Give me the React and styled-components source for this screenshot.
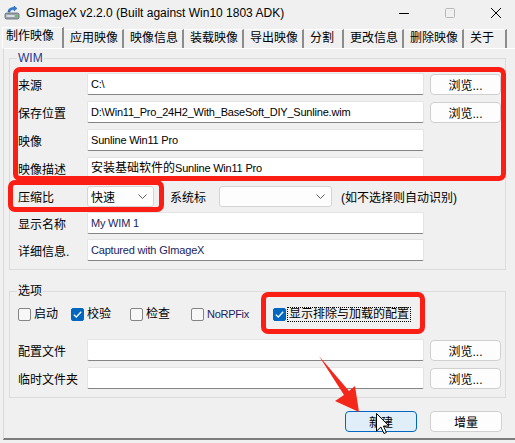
import React from "react";
import styled, { createGlobalStyle } from "styled-components";

const GlobalStyle = createGlobalStyle`
  html, body {
    margin: 0;
    padding: 0;
    background: #f0f0f0;
  }
  body {
    font-family: "Liberation Sans", "Noto Sans CJK SC", sans-serif;
    font-size: 12px;
    color: #000;
  }
`;

const Window = styled.div`
  position: relative;
  width: 515px;
  height: 443px;
  overflow: hidden;
  background: #f0f0f0;
`;

const TitleBar = styled.div`
  height: 25px;
  display: flex;
  align-items: center;
  padding-left: 4px;
  .title {
    margin-left: 6px;
    font-size: 12px;
    line-height: 16px;
  }
`;

const Controls = styled.div`
  margin-left: auto;
  margin-right: -4px;
  display: flex;
  height: 25px;
`;

const ControlBtn = styled.div`
  width: 46px;
  height: 25px;
  display: flex;
  align-items: center;
  justify-content: center;
`;

const TabStrip = styled.div`
  height: 23px;
  display: flex;
  align-items: flex-end;
  padding-left: 2px;
`;

const Tab = styled.div`
  box-sizing: border-box;
  width: ${({ $w }) => $w}px;
  height: ${({ $active }) => ($active ? 21 : 19)}px;
  padding-left: ${({ $active }) => ($active ? 3 : 6)}px;
  line-height: 17px;
  white-space: nowrap;
  border-top: 1px solid #fff;
  border-left: ${({ $active }) => ($active ? "1px solid #fff" : "none")};
  border-right: 2px solid #8c8c8c;
  background: #f0f0f0;
`;

const TabPage = styled.div`
  box-sizing: border-box;
  margin-left: 3px;
  height: 392px;
  padding: 9px 0 0 5px;
  border-top: 1px solid #fff;
  border-left: 1px solid #dadada;
  border-bottom: 2px solid #7c7c7c;
`;

const GroupBox = styled.div`
  position: relative;
  box-sizing: border-box;
  width: 497px;
  margin-top: ${({ $mt }) => $mt || 0}px;
  padding: ${({ $pad }) => $pad};
  border: 1px solid #dcdcdc;
`;

const GroupTitle = styled.span`
  position: absolute;
  top: -9px;
  left: 7px;
  padding: 0 1px;
  line-height: 16px;
  background: #f0f0f0;
  color: ${({ $color }) => $color || "#000"};
`;

const Row = styled.div`
  display: flex;
  align-items: center;
  height: ${({ $h }) => $h || 22}px;
  margin-top: ${({ $mt }) => $mt || 0}px;
`;

const Label = styled.div`
  width: 69px;
  flex-shrink: 0;
  white-space: nowrap;
`;

const TextBox = styled.div`
  box-sizing: border-box;
  width: 337px;
  height: 22px;
  padding-left: 3px;
  line-height: 20px;
  font-size: 11px;
  letter-spacing: -0.2px;
  background: #fff;
  border: 1px solid #e4e4e4;
  border-bottom-color: #858585;
  border-radius: 2px;
  white-space: nowrap;
  overflow: hidden;
  color: ${({ $color }) => $color || "#000"};
`;

const Cjk = styled.span`
  font-size: 12px;
  letter-spacing: 0;
`;

const Button = styled.div`
  box-sizing: border-box;
  width: 71px;
  height: 21px;
  margin-left: ${({ $ml }) => $ml || 0}px;
  display: flex;
  align-items: center;
  justify-content: center;
  background: ${({ $primary }) => ($primary ? "#e0eef9" : "#fdfdfd")};
  border: 1px solid ${({ $primary }) => ($primary ? "#0067c0" : "#d0d0d0")};
  border-radius: 4px;
`;

const Select = styled.div`
  box-sizing: border-box;
  width: ${({ $w }) => $w}px;
  height: 21px;
  margin-left: ${({ $ml }) => $ml || 0}px;
  padding: 0 6px 0 3px;
  display: flex;
  align-items: center;
  justify-content: space-between;
  background: #fdfdfd;
  border: 1px solid #d4d4d4;
  border-radius: 3px;
`;

const Plain = styled.span`
  margin-left: ${({ $ml }) => $ml || 0}px;
  white-space: nowrap;
`;

const CheckRow = styled.div`
  display: flex;
  align-items: center;
  height: 14px;
`;

const CheckItem = styled.div`
  display: flex;
  align-items: center;
  margin-left: ${({ $ml }) => $ml || 0}px;
  color: ${({ $color }) => $color || "#000"};
  span {
    margin-left: 3px;
    line-height: 13px;
    white-space: nowrap;
    font-size: ${({ $latin }) => ($latin ? "11px" : "12px")};
    letter-spacing: ${({ $latin }) => ($latin ? "-0.3px" : "0")};
  }
  span.focus {
    margin-left: 2px;
    padding: 0 1px;
    outline: 1px dotted #000;
  }
`;

const Box = styled.div`
  box-sizing: border-box;
  width: 13px;
  height: 13px;
  border-radius: 2px;
  display: flex;
  align-items: center;
  justify-content: center;
  background: ${({ $on }) => ($on ? "#0067c0" : "#f7f7f7")};
  border: 1px solid ${({ $on }) => ($on ? "#0067c0" : "#858585")};
`;

const ButtonBar = styled.div`
  width: 497px;
  box-sizing: border-box;
  margin-top: 13px;
  padding-right: 4px;
  display: flex;
  justify-content: flex-end;
  gap: 13px;
  ${Button} {
    width: 72px;
  }
`;

const Mark = styled.div`
  position: absolute;
  left: ${({ $x }) => $x}px;
  top: ${({ $y }) => $y}px;
  width: ${({ $w }) => $w}px;
  height: ${({ $h }) => $h}px;
  box-sizing: border-box;
  border: 5px solid #fb1e14;
  border-radius: 7px;
  pointer-events: none;
`;

const Overlay = styled.svg`
  position: absolute;
  left: 0;
  top: 0;
  pointer-events: none;
`;

const Chevron = () => (
  <svg width="9" height="5" viewBox="0 0 9 5">
    <path d="M0.5 0.5 L4.5 4.5 L8.5 0.5" fill="none" stroke="#606060" strokeWidth="1" />
  </svg>
);

const Check = ({ on }) => (
  <Box $on={on}>
    {on && (
      <svg width="9" height="7" viewBox="0 0 9 7">
        <path d="M0.8 3.6 L3.3 6 L8.2 0.8" fill="none" stroke="#fff" strokeWidth="1.3" />
      </svg>
    )}
  </Box>
);

const AppIcon = () => (
  <svg width="16" height="16" viewBox="0 0 16 16">
    <rect x="1" y="8" width="14" height="6" rx="1.5" fill="#9aa3ab" stroke="#5d666e" strokeWidth="0.8" />
    <rect x="2.5" y="10" width="8" height="2" fill="#d8dde2" />
    <circle cx="12.5" cy="11" r="0.9" fill="#4fd04f" />
    <path d="M4 7 C4 3.5 7 2.5 10 2.5 L10 1 L13 3.5 L10 6 L10 4.5 C8 4.5 6 5 6 7 Z" fill="#2f7fd8" stroke="#1b4f96" strokeWidth="0.5" />
  </svg>
);

const tabs = [
  ["制作映像", 62],
  ["应用映像", 60],
  ["映像信息", 60],
  ["装载映像", 60],
  ["导出映像", 60],
  ["分割", 40],
  ["更改信息", 60],
  ["删除映像", 60],
  ["关于", 43],
];

const checks = [
  { label: "启动", ml: 0 },
  { label: "校验", ml: 13, on: true },
  { label: "检查", ml: 19 },
  { label: "NoRPFix", ml: 21, color: "#1b2460", latin: true },
];

export default function App() {
  return (
    <Window>
      <GlobalStyle />
      <TitleBar>
        <AppIcon />
        <span className="title">GImageX v2.2.0 (Built against Win10 1803 ADK)</span>
        <Controls>
          <ControlBtn>
            <svg width="10" height="10" viewBox="0 0 10 10">
              <path d="M0 5.5 H10" stroke="#000" strokeWidth="1" />
            </svg>
          </ControlBtn>
          <ControlBtn>
            <svg width="10" height="10" viewBox="0 0 10 10">
              <rect x="0.5" y="0.5" width="9" height="9" rx="1" fill="none" stroke="#b8b8b8" />
            </svg>
          </ControlBtn>
          <ControlBtn>
            <svg width="10" height="10" viewBox="0 0 10 10">
              <path d="M0 0 L10 10 M10 0 L0 10" stroke="#000" strokeWidth="1" />
            </svg>
          </ControlBtn>
        </Controls>
      </TitleBar>

      <TabStrip>
        {tabs.map(([t, w], i) => (
          <Tab key={t} $w={w} $active={i === 0}>
            {t}
          </Tab>
        ))}
      </TabStrip>

      <TabPage>
        <GroupBox $pad="14px 0 8px 8px">
          <GroupTitle $color="#1f3a93">WIM</GroupTitle>
          <Row>
            <Label>来源</Label>
            <TextBox>C:\</TextBox>
            <Button $ml={6}>浏览...</Button>
          </Row>
          <Row $mt={6}>
            <Label>保存位置</Label>
            <TextBox>D:\Win11_Pro_24H2_With_BaseSoft_DIY_Sunline.wim</TextBox>
            <Button $ml={6}>浏览...</Button>
          </Row>
          <Row $mt={6}>
            <Label>映像</Label>
            <TextBox>Sunline Win11 Pro</TextBox>
          </Row>
          <Row $mt={6}>
            <Label>映像描述</Label>
            <TextBox>
              <Cjk>安装基础软件的</Cjk>Sunline Win11 Pro
            </TextBox>
          </Row>
          <Row $mt={7} $h={21}>
            <Label>压缩比</Label>
            <Select $w={67}>
              <span>快速</span>
              <Chevron />
            </Select>
            <Plain $ml={16}>系统标</Plain>
            <Select $w={113} $ml={13}>
              <span />
              <Chevron />
            </Select>
            <Plain $ml={9}>(如不选择则自动识别)</Plain>
          </Row>
          <Row $mt={5}>
            <Label>显示名称</Label>
            <TextBox $color="#1b2460">My WIM 1</TextBox>
          </Row>
          <Row $mt={5}>
            <Label>详细信息.</Label>
            <TextBox $color="#1b2460">Captured with GImageX</TextBox>
          </Row>
        </GroupBox>

        <GroupBox $mt={21} $pad="15px 0 8px 8px">
          <GroupTitle>选项</GroupTitle>
          <CheckRow>
            {checks.map((c) => (
              <CheckItem key={c.label} $ml={c.ml} $color={c.color} $latin={c.latin}>
                <Check on={c.on} />
                <span>{c.label}</span>
              </CheckItem>
            ))}
            <CheckItem $ml={24}>
              <Check on />
              <span className="focus">显示排除与加载的配置</span>
            </CheckItem>
          </CheckRow>
          <Row $mt={18}>
            <Label>配置文件</Label>
            <TextBox />
            <Button $ml={6}>浏览...</Button>
          </Row>
          <Row $mt={6}>
            <Label>临时文件夹</Label>
            <TextBox />
            <Button $ml={6}>浏览...</Button>
          </Row>
        </GroupBox>

        <ButtonBar>
          <Button $primary>新建</Button>
          <Button>增量</Button>
        </ButtonBar>
      </TabPage>

      <Mark $x={13} $y={67} $w={493} $h={114} />
      <Mark $x={8} $y={180} $w={156} $h={32} />
      <Mark $x={261} $y={292} $w={164} $h={42} />

      <Overlay width="515" height="443" viewBox="0 0 515 443">
        <polygon
          points="319,356 349,391 355,386 359,412 335,401 344,395"
          fill="#f3271a"
        />
        <g transform="translate(376.5 413.5) scale(1.1)">
          <path
            d="M0 0 L0 16 L4 12.3 L6.8 18.2 L9 17.2 L6.3 11.4 L11.3 11.4 Z"
            fill="#fff"
            stroke="#000"
            strokeWidth="0.9"
            strokeLinejoin="round"
          />
        </g>
      </Overlay>
    </Window>
  );
}
